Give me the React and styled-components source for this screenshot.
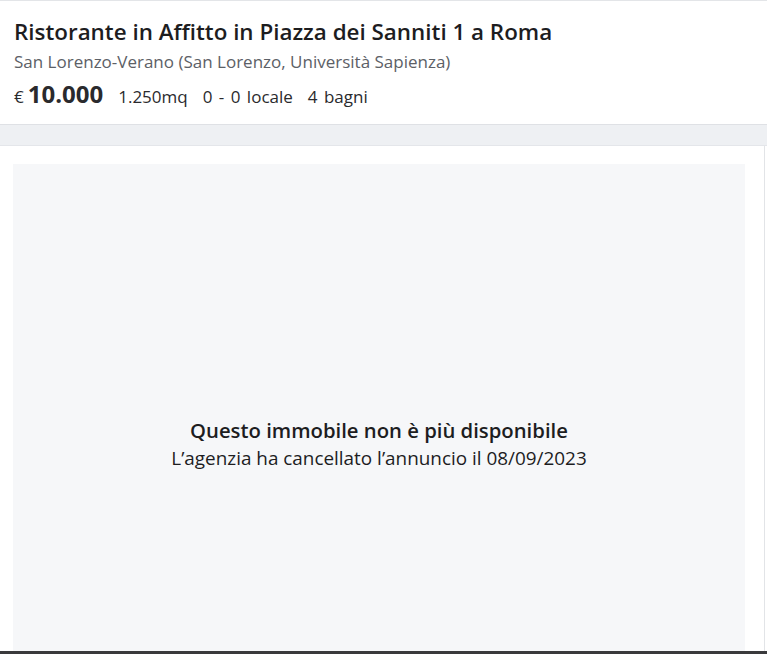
import React from 'react';
import styled, { createGlobalStyle } from 'styled-components';

const GlobalStyle = createGlobalStyle`
    html, body {
        margin: 0;
        padding: 0;
        background: #ffffff;
        font-family: 'Open Sans', 'Liberation Sans', sans-serif;
        color: #1d1d1f;
    }
`;

const Page = styled.div`
    width: 767px;
    height: 654px;
    overflow: hidden;
    display: flex;
    flex-direction: column;
`;

const Header = styled.header`
    height: 124px;
    box-sizing: border-box;
    border-top: 1px solid #e3e5e8;
    padding: 15px 14px 0;
    background: #fff;
`;

const Title = styled.h1`
    margin: 0;
    font-size: 22.4px;
    font-weight: 600;
    line-height: 32px;
    color: #1d1d1f;
`;

const Zone = styled.p`
    margin: 2px 0 0;
    font-size: 17px;
    font-weight: 400;
    line-height: 24px;
    color: #5c6066;
`;

const Features = styled.div`
    display: flex;
    align-items: baseline;
    gap: 15px;
    margin-top: 3px;
    font-size: 17px;
    word-spacing: 2px;
    color: #2a2a2d;
`;

const Price = styled.span`
    display: flex;
    align-items: baseline;
    gap: 4px;
    word-spacing: 0;
`;

const Currency = styled.span`
    font-size: 17px;
`;

const Amount = styled.strong`
    font-size: 24px;
    font-weight: 700;
`;

const Band = styled.div`
    height: 20px;
    background: #eef0f3;
    border-top: 1px solid #dfe1e5;
    border-bottom: 1px solid #e4e6ea;
`;

const Card = styled.section`
    flex: 1;
    width: 765px;
    box-sizing: border-box;
    border-right: 1px solid #e2e4e7;
    padding: 18px 19px 0 13px;
    display: flex;
    flex-direction: column;
`;

const Panel = styled.div`
    flex: 1;
    background: #f6f7f9;
    display: flex;
    flex-direction: column;
    align-items: center;
    justify-content: center;
    padding-top: 72px;
    text-align: center;
`;

const Notice = styled.h2`
    margin: 0;
    font-size: 20.3px;
    font-weight: 600;
    line-height: 28px;
    color: #1d1d1f;
`;

const NoticeText = styled.p`
    margin: 0;
    font-size: 18.9px;
    line-height: 28px;
    color: #1d1d1f;
`;

const BottomEdge = styled.div`
    height: 3px;
    background: #3a3a3c;
`;

const App = () => (
    <Page>
        <GlobalStyle />
        <Header>
            <Title>Ristorante in Affitto in Piazza dei Sanniti 1 a Roma</Title>
            <Zone>San Lorenzo-Verano (San Lorenzo, Università Sapienza)</Zone>
            <Features>
                <Price>
                    <Currency>€</Currency>
                    <Amount>10.000</Amount>
                </Price>
                <span>1.250mq</span>
                <span>0 - 0 locale</span>
                <span>4 bagni</span>
            </Features>
        </Header>
        <Band />
        <Card>
            <Panel>
                <Notice>Questo immobile non è più disponibile</Notice>
                <NoticeText>L’agenzia ha cancellato l’annuncio il 08/09/2023</NoticeText>
            </Panel>
        </Card>
        <BottomEdge />
    </Page>
);

export default App;
